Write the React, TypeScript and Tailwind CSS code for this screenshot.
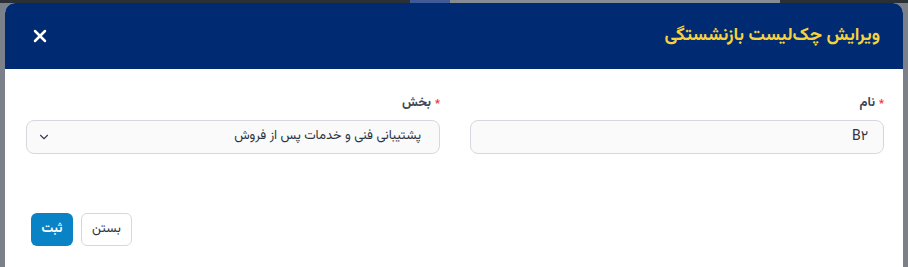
import { X, ChevronDown } from "lucide-react";

const FONT = { fontFamily: "Vazirmatn, 'DejaVu Sans', 'Noto Sans', sans-serif" };

function Label({ text }: { text: string }) {
  return (
    <label className="flex items-center gap-1 text-[13px] font-bold text-[#3f4654] h-5 mb-[6px]">
      <span className="text-red-500 text-[11px] leading-none">*</span>
      {text}
    </label>
  );
}

export default function App() {
  return (
    <div className="w-[908px] h-[267px] bg-[#7c8088] overflow-hidden flex flex-col" style={FONT}>
      {/* page behind the overlay */}
      <div className="h-[3px] flex shrink-0" dir="ltr">
        <div className="w-[410px] bg-[#2b2f36]" />
        <div className="w-[40px] bg-[#3f5a96]" />
        <div className="w-[330px] bg-[#878b93]" />
        <div className="flex-1 bg-[#2b2f36]" />
      </div>

      {/* modal */}
      <div dir="rtl" className="mx-[5px] flex-1 rounded-t-[10px] bg-white overflow-hidden flex flex-col">
        <div className="h-[66px] bg-[#002a72] flex items-center justify-between pr-[23px] pl-[25px] shrink-0">
          <h2 className="text-[18px] font-bold text-[#f6d33c]">ویرایش چک‌لیست بازنشستگی</h2>
          <X className="w-[20px] h-[20px] text-white" strokeWidth={3} />
        </div>

        <div className="pr-[19px] pl-[21px] pt-[25px] grid grid-cols-2 gap-[30px]">
          <div className="flex flex-col">
            <Label text="نام" />
            <div className="h-[34px] rounded-lg border border-[#d6d8dd] bg-[#fafafa] flex items-center px-[15px] text-[14px] text-[#2d3340]">
              B۲
            </div>
          </div>
          <div className="flex flex-col">
            <Label text="بخش" />
            <div className="h-[34px] rounded-lg border border-[#d6d8dd] bg-[#fafafa] flex items-center justify-between pr-[18px] pl-[10px] text-[13px] text-[#2d3340]">
              <span>پشتیبانی فنی و خدمات پس از فروش</span>
              <ChevronDown className="w-[14px] h-[14px] text-[#3b4150]" strokeWidth={2} />
            </div>
          </div>
        </div>

        <div className="flex gap-2 pl-[26px] pt-[59px]" dir="ltr">
          <button className="h-[33px] w-[42px] rounded-md bg-[#0983c6] text-white text-[13px] font-bold">
            ثبت
          </button>
          <button className="h-[33px] w-[51px] rounded-md border border-[#d6d8dd] bg-white text-[#2d3340] text-[13px]">
            بستن
          </button>
        </div>
      </div>
    </div>
  );
}
